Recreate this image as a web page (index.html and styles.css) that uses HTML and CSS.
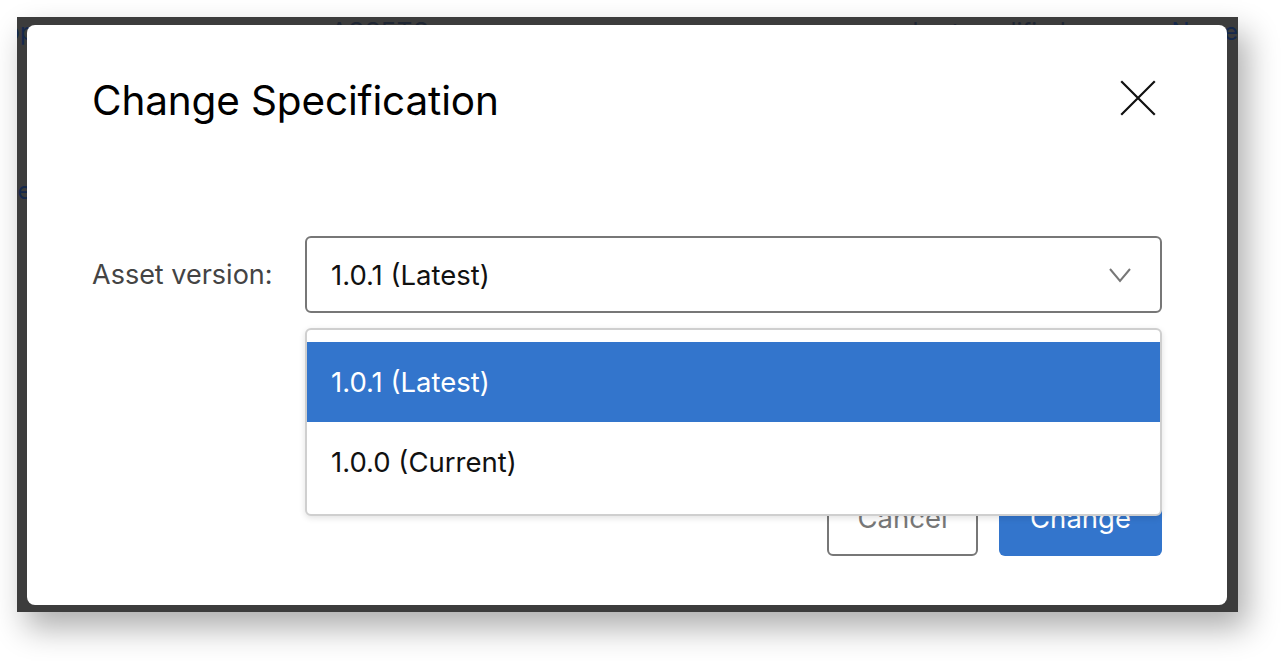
FILE: index.html
```html
<!DOCTYPE html>
<html lang="en">
<head>
<meta charset="utf-8">
<title>Change Specification</title>
<link rel="stylesheet" href="styles.css">
</head>
<body>
<div class="frame">
  <div class="page">
    <div class="page-header">
      <span class="bg-text bg-top">Top</span>
      <span class="bg-text bg-assets">ASSETS</span>
      <span class="bg-text bg-mod">Last modified</span>
      <span class="bg-text bg-name">Name</span>
    </div>
    <div class="page-row">
      <span class="bg-text bg-user">User</span>
    </div>
  </div>

  <div class="modal" role="dialog" aria-labelledby="dlg-title">
    <div class="modal-header">
      <h1 id="dlg-title" class="modal-title">Change Specification</h1>
      <button class="close-btn" aria-label="Close">
        <svg width="36" height="36" viewBox="0 0 36 36"><path d="M2 2 L34 34 M34 2 L2 34" stroke="#111" stroke-width="2.2" fill="none" stroke-linecap="square"/></svg>
      </button>
    </div>

    <div class="form-row">
      <label class="field-label">Asset version:</label>
      <div class="select-wrap">
        <div class="select">
          <span class="select-value">1.0.1 (Latest)</span>
          <svg class="chevron" width="24" height="16" viewBox="0 0 24 16"><path d="M2 2 L12 14 L22 2" stroke="#777" stroke-width="2" fill="none"/></svg>
        </div>
        <ul class="dropdown">
          <li class="option selected">1.0.1 (Latest)</li>
          <li class="option">1.0.0 (Current)</li>
        </ul>
      </div>
    </div>

    <div class="modal-footer">
      <button class="btn btn-cancel">Cancel</button>
      <button class="btn btn-primary">Change</button>
    </div>
  </div>
</div>
</body>
</html>
```

FILE: styles.css
```css
* { box-sizing: border-box; }

html, body {
  margin: 0;
  padding: 0;
  background: #ffffff;
  font-family: "Inter", "Liberation Sans", Arial, sans-serif;
}

body {
  padding: 17px 0 0 17px;
  width: 1287px;
  height: 661px;
  overflow: hidden;
}

.frame {
  position: relative;
  width: 1221px;
  height: 595px;
  background: #3c3c3c;
  overflow: hidden;
  box-shadow: 9px 16px 30px rgba(0, 0, 0, 0.32);
}

/* page behind the dimmed overlay */
.page {
  width: 100%;
  height: 100%;
  color: #15284c;
  font-size: 24px;
  line-height: 29px;
}

.page-header {
  display: flex;
  align-items: center;
  height: 28px;
}

.bg-text { white-space: nowrap; }
.bg-top { margin-left: -25px; width: 362px; }
.bg-assets { width: 590px; margin-left: -17px; letter-spacing: 1px; color: #1f2633; }
.bg-mod { width: 282px; margin-left: 1px; color: #1f2633; }
.bg-name { margin-left: -18px; }

.page-row {
  display: flex;
  margin-top: 131px;
}
.bg-user { margin-left: -30px; }

/* modal */
.modal {
  position: absolute;
  left: 10px;
  top: 8px;
  width: 1200px;
  height: 580px;
  background: #ffffff;
  border-radius: 8px;
  padding: 50px 65px 49px 65px;
  display: flex;
  flex-direction: column;
}

.modal-header {
  display: flex;
  align-items: center;
  justify-content: space-between;
  height: 50px;
}

.modal-title {
  margin: 0;
  font-size: 40.5px;
  font-weight: 400;
  color: #000;
  letter-spacing: -0.15px;
}

.close-btn {
  border: 0;
  background: none;
  padding: 0;
  width: 36px;
  height: 36px;
  margin-right: 6px;
  margin-top: -5px;
  cursor: pointer;
  display: flex;
}

.form-row {
  display: flex;
  align-items: center;
  margin-top: 111px;
}

.field-label {
  width: 213px;
  font-size: 27px;
  color: #444;
}

.select-wrap {
  position: relative;
  flex: 1;
}

.select {
  height: 77px;
  border: 2px solid #777;
  border-radius: 6px;
  display: flex;
  align-items: center;
  justify-content: space-between;
  padding: 0 28px 0 24px;
}

.select-value {
  font-size: 27.5px;
  color: #111;
}

.chevron { display: block; }

.dropdown {
  position: absolute;
  left: 0;
  right: 0;
  top: 92px;
  margin: 0;
  padding: 12px 0;
  list-style: none;
  background: #fff;
  border: 2px solid #cfcfcf;
  border-radius: 6px;
  box-shadow: 0 2px 6px rgba(0, 0, 0, 0.12);
  z-index: 2;
}

.option {
  height: 80px;
  display: flex;
  align-items: center;
  padding-left: 24px;
  font-size: 27.5px;
  color: #111;
}

.option.selected {
  background: #3375cc;
  color: #fff;
}

.modal-footer {
  margin-top: auto;
  display: flex;
  justify-content: flex-end;
  gap: 21px;
}

.btn {
  height: 76px;
  border-radius: 6px;
  font-family: inherit;
  font-size: 27.5px;
  cursor: pointer;
}

.btn-cancel {
  width: 151px;
  background: #fff;
  border: 2px solid #777;
  color: #777;
}

.btn-primary {
  width: 163px;
  background: #3375cc;
  border: 0;
  color: #fff;
}
```
